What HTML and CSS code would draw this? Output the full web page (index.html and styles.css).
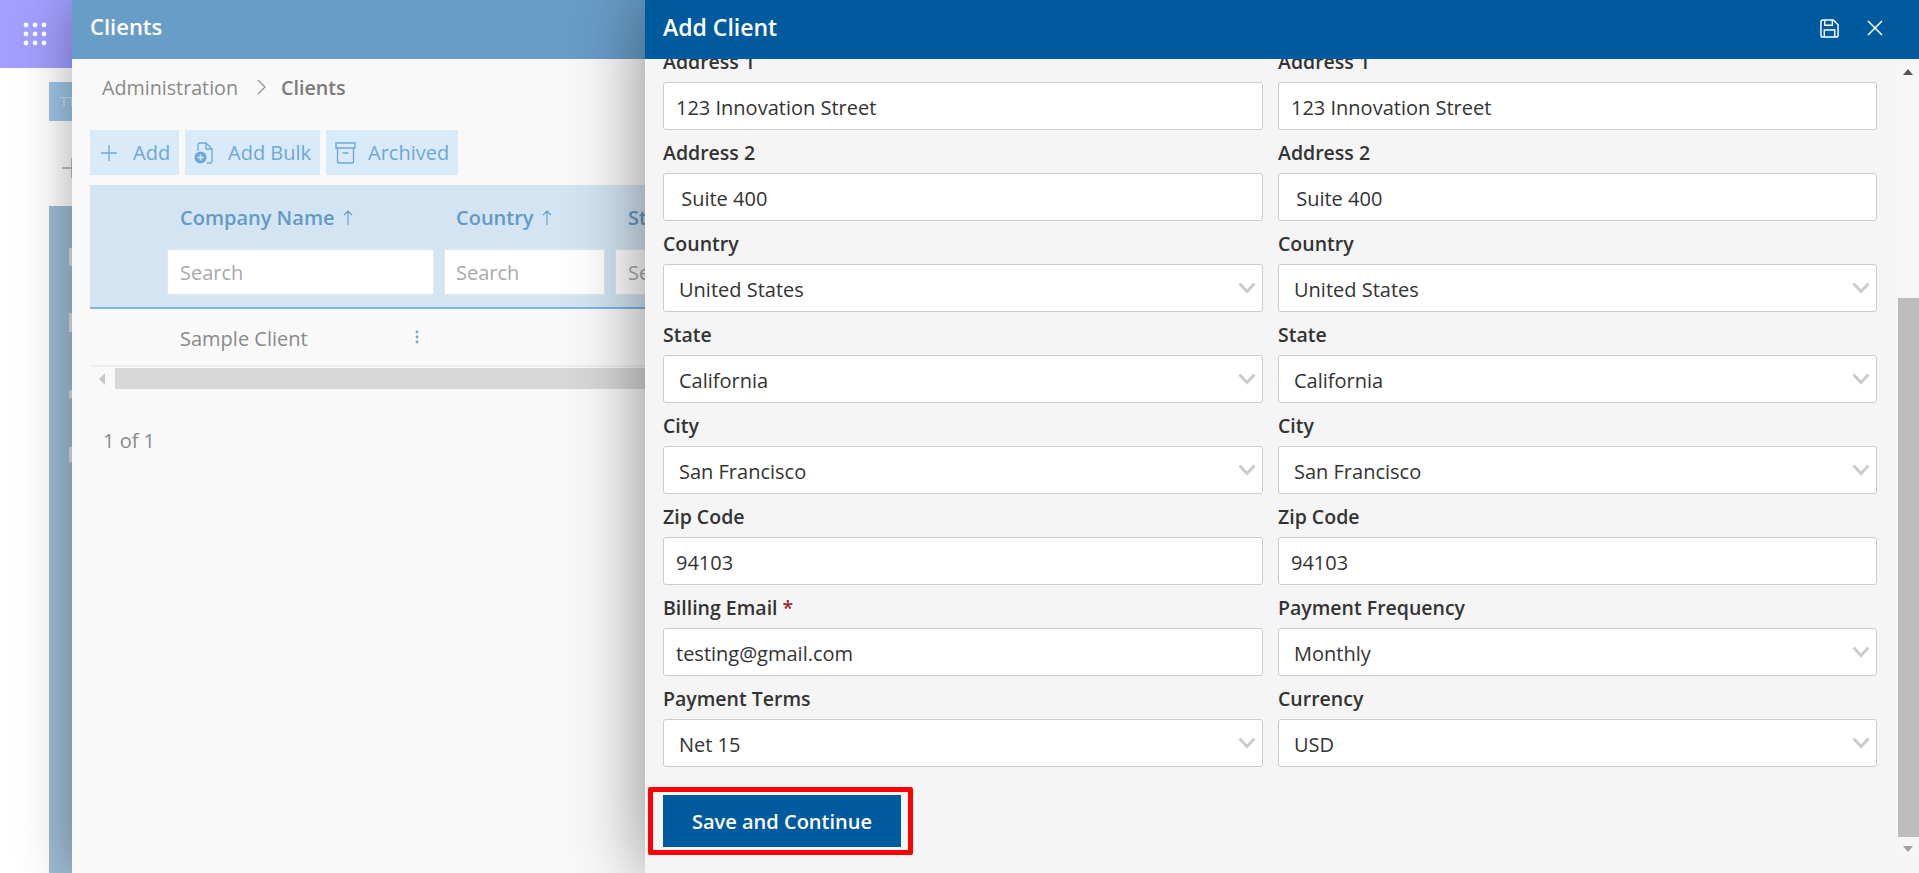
FILE: index.html
```html
<!DOCTYPE html>
<html lang="en">
<head>
  <meta charset="UTF-8" />
  <title>Clients</title>
  <link rel="stylesheet" href="styles.css">
</head>
<body>
  <div class="app">
    <div class="topbar">
      <svg class="waffle" width="24" height="24" viewBox="0 0 24 24" fill="#fff">
        <circle cx="3" cy="3" r="2.4"/><circle cx="12" cy="3" r="2.4"/><circle cx="21" cy="3" r="2.4"/>
        <circle cx="3" cy="12" r="2.4"/><circle cx="12" cy="12" r="2.4"/><circle cx="21" cy="12" r="2.4"/>
        <circle cx="3" cy="21" r="2.4"/><circle cx="12" cy="21" r="2.4"/><circle cx="21" cy="21" r="2.4"/>
      </svg>
    </div>
    <div class="back">
      <div class="tile">TT</div>
      <svg class="back-plus" width="24" height="24" viewBox="0 0 24 24" stroke="#aaa" stroke-width="1.4"><path d="M12 2v20M2 12h20"/></svg>
      <div class="side">
        <i class="sliver s1"></i>
        <i class="sliver s2"></i>
        <i class="sliver s3"></i>
        <i class="sliver s4"></i>
      </div>
    </div>
  </div>

  <section class="panel">
    <div class="panel-head">Clients</div>
    <div class="crumbs">
      <span>Administration</span>
      <svg width="9" height="16" viewBox="0 0 9 16" fill="none" stroke="#8a8a8a" stroke-width="1.1"><path d="M1 1l7 7-7 7"/></svg>
      <b>Clients</b>
    </div>
    <div class="actions">
      <button class="act act-add">
        <svg width="18" height="18" viewBox="0 0 18 18" stroke="#6ea8d6" stroke-width="1.3"><path d="M9 1v16M1 9h16"/></svg>
        Add
      </button>
      <button class="act act-bulk">
        <svg width="19" height="22" viewBox="0 0 19 22" fill="none" stroke="#6ea8d6" stroke-width="1.3">
          <path d="M4 9V2.5Q4 1 5.5 1H12l6 6v12.5Q18 21 16.500 21H13"/><path d="M12 1v6h6"/>
          <circle cx="6.500" cy="15.500" r="6" fill="#6ea8d6" stroke="none"/>
          <path d="M6.500 12.500v6M3.500 15.500h6" stroke="#d9eaf9" stroke-width="1.500"/>
        </svg>
        Add Bulk
      </button>
      <button class="act act-arch">
        <svg width="21" height="22" viewBox="0 0 21 22" fill="none" stroke="#6ea8d6" stroke-width="1.4">
          <path d="M1 1h19v5H1zM2.500 6v13.500Q2.500 21 4 21h13q1.500 0 1.500-1.500V6M7.500 11h6"/>
        </svg>
        Archived
      </button>
    </div>

    <div class="grid-head">
      <span class="col-title c1">Company Name <svg width="10" height="15" viewBox="0 0 10 15" fill="none" stroke="#6499c6" stroke-width="1.100"><path d="M5 15V1M1 5l4-4 4 4"/></svg></span>
      <span class="col-title c2">Country <svg width="10" height="15" viewBox="0 0 10 15" fill="none" stroke="#6499c6" stroke-width="1.100"><path d="M5 15V1M1 5l4-4 4 4"/></svg></span>
      <span class="col-title c3">State</span>
      <input class="search c1" placeholder="Search">
      <input class="search c2" placeholder="Search">
      <input class="search c3" placeholder="Search">
    </div>
    <div class="grid-row">
      <span class="client">Sample Client</span>
      <svg width="4" height="14" viewBox="0 0 4 14" fill="#6ea8d6"><circle cx="2" cy="2" r="1.400"/><circle cx="2" cy="7" r="1.400"/><circle cx="2" cy="12" r="1.400"/></svg>
    </div>
    <div class="hscroll">
      <span class="hscroll-btn"><i></i></span>
      <span class="hscroll-thumb"></span>
    </div>
    <div class="pager">1 of 1</div>
  </section>

  <section class="drawer">
    <header class="drawer-head">
      <h2>Add Client</h2>
      <svg class="ico-save" width="19" height="19" viewBox="0 0 20 20" fill="none" stroke="#fff" stroke-width="1.500">
        <path d="M3 1h11l5 5v11q0 2-2 2H3q-2 0-2-2V3q0-2 2-2z"/><path d="M5 1v5.500h8V1M4.500 19v-7.500h11V19"/>
      </svg>
      <svg class="ico-close" width="16" height="16" viewBox="0 0 16 16" fill="none" stroke="#fff" stroke-width="1.500"><path d="M1 1l14 14M15 1L1 15"/></svg>
    </header>

    <div class="drawer-body">
      <form class="form">
        <div class="field"><label>Address 1</label><input class="ctl" value="123 Innovation Street"></div>
        <div class="field"><label>Address 1</label><input class="ctl" value="123 Innovation Street"></div>

        <div class="field"><label>Address 2</label><input class="ctl" value=" Suite 400"></div>
        <div class="field"><label>Address 2</label><input class="ctl" value=" Suite 400"></div>

        <div class="field"><label>Country</label><select class="ctl sel"><option>United States</option></select></div>
        <div class="field"><label>Country</label><select class="ctl sel"><option>United States</option></select></div>

        <div class="field"><label>State</label><select class="ctl sel"><option>California</option></select></div>
        <div class="field"><label>State</label><select class="ctl sel"><option>California</option></select></div>

        <div class="field"><label>City</label><select class="ctl sel"><option>San Francisco</option></select></div>
        <div class="field"><label>City</label><select class="ctl sel"><option>San Francisco</option></select></div>

        <div class="field"><label>Zip Code</label><input class="ctl" value="94103"></div>
        <div class="field"><label>Zip Code</label><input class="ctl" value="94103"></div>

        <div class="field"><label>Billing Email <span class="req">*</span></label><input class="ctl" value="testing@gmail.com"></div>
        <div class="field"><label>Payment Frequency</label><select class="ctl sel"><option>Monthly</option></select></div>

        <div class="field"><label>Payment Terms</label><select class="ctl sel"><option>Net 15</option></select></div>
        <div class="field"><label>Currency</label><select class="ctl sel"><option>USD</option></select></div>
      </form>
      <div class="mark">
        <button class="save-btn" type="button">Save and Continue</button>
      </div>
    </div>

    <div class="vscroll">
      <i class="arrow-up"></i>
      <span class="vscroll-space"></span>
      <span class="vscroll-thumb"></span>
      <i class="arrow-down"></i>
    </div>
  </section>
</body>
</html>
```

FILE: styles.css
```css
* {
  box-sizing: border-box;
}
body {
  margin: 0;
  height: 873px;
  overflow: hidden;
  position: relative;
  background: #fff;
  font-family: "Open Sans", "Noto Sans", sans-serif;
  font-size: 20px;
}
button, input, select {
  font-family: inherit;
}

/* page behind the panels */
.topbar {
  height: 68px;
  background: #a29fff;
  padding: 22px 0 0 23px;
}
.waffle {
  display: block;
}
.back {
  padding: 14px 0 0 49px;
}
.tile {
  width: 40px;
  height: 39px;
  background: #9dc6e6;
  color: #c9e0f2;
  font-size: 14px;
  padding: 10px 0 0 11px;
}
.back-plus {
  display: block;
  margin: 35px 0 0 11px;
}
.side {
  margin-top: 26px;
  height: 700px;
  background: #9fbdd6;
  padding: 42px 0 0 20px;
  display: flex;
  flex-direction: column;
}
.sliver {
  display: block;
  width: 4px;
  background: #d5e2ec;
}
.s1 { height: 18px; }
.s2 { height: 19px; margin-top: 47px; }
.s3 { height: 8px; margin-top: 58px; width: 3px; }
.s4 { height: 15px; margin-top: 49px; width: 3px; }

/* clients panel */
.panel {
  position: absolute;
  top: 0;
  bottom: 0;
  left: 72px;
  right: 0;
  background: #f9f9f9;
  box-shadow: 0 0 50px rgba(0, 0, 0, .35);
  padding-bottom: 20px;
}
.panel-head {
  height: 59px;
  background: #689dc8;
  color: #fff;
  font-size: 22px;
  font-weight: 600;
  line-height: 52px;
  padding-left: 18px;
}
.crumbs {
  display: flex;
  align-items: center;
  gap: 15px;
  height: 58px;
  padding: 0 0 2px 30px;
  color: #8a8a8a;
  font-size: 19.7px;
}
.crumbs svg {
  margin-left: 4px;
}
.crumbs b {
  font-weight: 600;
  color: #7c7c7c;
}
.actions {
  display: flex;
  gap: 6px;
  margin: 13px 0 0 18px;
}
.act {
  height: 45px;
  border: 0;
  background: #d9eaf9;
  color: #6ea8d6;
  font-size: 20px;
  display: flex;
  align-items: center;
  padding: 0;
}
.act-add { width: 89px; padding-left: 10px; gap: 15px; }
.act-bulk { width: 135px; padding-left: 9px; gap: 15px; }
.act-arch { width: 132px; padding-left: 9px; gap: 12px; }

.grid-head {
  margin: 10px 0 0 18px;
  height: 124px;
  background: #d3e5f3;
  border-bottom: 2px solid #7db5e6;
  display: grid;
  grid-template-columns: 267px 161px 200px;
  grid-template-rows: 64px 46px;
  column-gap: 10px;
  padding-left: 77px;
}
.col-title {
  color: #6499c6;
  font-size: 20px;
  font-weight: 600;
  padding: 19px 0 0 13px;
  white-space: nowrap;
}
.col-title.c2 {
  padding-left: 12px;
}
.col-title svg {
  margin-left: 3px;
}
.search {
  height: 46px;
  border: 1px solid #e6e6e6;
  border-radius: 2px;
  background: #fff;
  font-size: 20px;
  padding: 0 12px;
}
.search.c2 {
  padding-left: 11px;
}
.search::placeholder {
  color: #a9a9a9;
  opacity: 1;
}
.grid-row {
  margin-left: 18px;
  height: 58px;
  border-bottom: 2px solid #eee;
  display: flex;
  align-items: center;
  padding-left: 90px;
  color: #8a8a8a;
}
.client {
  width: 235px;
  padding-top: 2px;
}
.hscroll {
  margin: 1px 0 0 18px;
  height: 21px;
  display: flex;
}
.hscroll-btn {
  width: 25px;
  display: flex;
  align-items: center;
  padding-left: 9px;
}
.hscroll-btn i {
  border-style: solid;
  border-width: 6px 6px 6px 0;
  border-color: transparent #c9c9c9 transparent transparent;
}
.hscroll-thumb {
  flex: 1;
  background: #d8d8d8;
}
.pager {
  margin: 38px 0 0 31px;
  color: #8a8a8a;
}

/* add client drawer */
.drawer {
  position: absolute;
  top: 0;
  bottom: 0;
  left: 645px;
  right: 0;
  background: #f5f5f5;
  box-shadow: 0 0 70px rgba(0, 0, 0, .45);
  overflow: hidden;
}
.drawer-head {
  position: relative;
  z-index: 1;
  height: 59px;
  background: #005a9e;
  color: #fff;
  display: flex;
  align-items: center;
  padding: 0 36px 0 18px;
}
.drawer-head h2 {
  margin: 0 auto 6px 0;
  font-size: 23px;
  font-weight: 600;
}
.ico-save {
  margin: 0 28px 3px 0;
}
.ico-close {
  margin-bottom: 3px;
}
.drawer-body {
  padding: 0 41px 0 18px;
}
.form {
  margin-top: -20px;
  display: grid;
  grid-template-columns: 600px 599px;
  column-gap: 15px;
}
.field label {
  display: block;
  height: 43px;
  line-height: 30px;
  padding-top: 8px;
  color: #333;
  font-size: 19.5px;
  font-weight: 600;
  white-space: nowrap;
}
.req {
  color: #a4262c;
}
.ctl {
  display: block;
  width: 100%;
  height: 48px;
  border: 1px solid #ccc;
  border-radius: 3px;
  background-color: #fff;
  color: #333;
  font-size: 20px;
  padding: 2px 12px 0;
}
.sel {
  appearance: none;
  padding-left: 15px;
  background-image: url("data:image/svg+xml,%3Csvg xmlns='http://www.w3.org/2000/svg' width='18' height='12'%3E%3Cpath d='M1.500 1.500L9 9.500l7.500-8' fill='none' stroke='%23ccc' stroke-width='3'/%3E%3C/svg%3E");
  background-repeat: no-repeat;
  background-position: right 6px center;
}
.mark {
  width: 265px;
  height: 68px;
  margin: 20px 0 0 -15px;
  border: 5px solid #f00;
  border-radius: 2px;
  padding: 3px 0 0 10px;
}
.save-btn {
  display: block;
  width: 238px;
  height: 52px;
  border: 0;
  background: #005a9e;
  color: #fff;
  font-size: 20px;
  font-weight: 600;
}
.vscroll {
  position: absolute;
  top: 59px;
  right: 0;
  width: 24px;
  height: 803px;
  background: #f6f6f6;
  display: flex;
  flex-direction: column;
  align-items: flex-end;
}
.arrow-up, .arrow-down {
  display: block;
  width: 0;
  margin-right: 6px;
  border-style: solid;
  border-color: transparent;
  border-width: 0 5.500px;
}
.arrow-up {
  margin-top: 10px;
  border-bottom: 6px solid #555;
}
.vscroll-space {
  height: 223px;
}
.vscroll-thumb {
  width: 21px;
  height: 539px;
  background: #bdbdbd;
}
.arrow-down {
  margin-top: 9px;
  border-top: 6px solid #a0a0a0;
}
```
